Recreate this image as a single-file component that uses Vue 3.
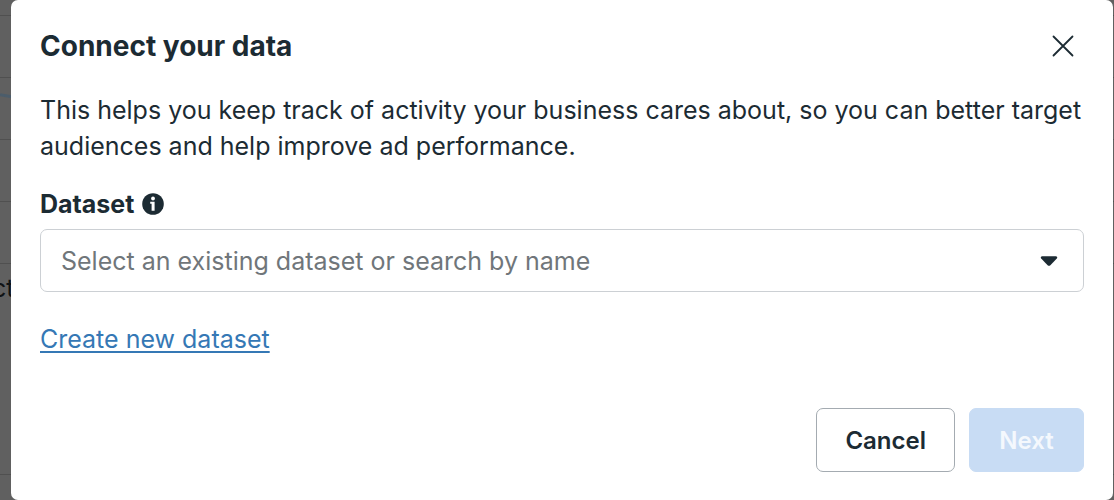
<script setup>
import { ref } from 'vue'

const open = ref(true)
const search = ref('')

const close = () => {
  open.value = false
}
</script>

<template>
  <main class="page">
    <!-- page behind the dialog -->
    <div class="backdrop" aria-hidden="true">
      <div class="chart-row chart-row-first"></div>
      <div class="chart-row"></div>
      <div class="chart-row">
        <svg class="chart-line" viewBox="0 0 12 8" width="12" height="8">
          <path d="M0 2.8 L12 4.8" stroke="#4c5d6b" stroke-width="3" fill="none" />
        </svg>
      </div>
      <div class="chart-row"></div>
      <div class="chart-row"></div>
      <div class="chart-row chart-row-text">
        <span>ct</span>
      </div>
    </div>

    <section v-if="open" class="dialog" role="dialog" aria-labelledby="dialog-title">
      <header class="dialog-header">
        <h1 id="dialog-title">Connect your data</h1>
        <button class="close" type="button" aria-label="Close" @click="close">
          <svg viewBox="0 0 22 22" width="22" height="22">
            <path d="M1.5 1.5 L20.5 20.5 M20.5 1.5 L1.5 20.5" stroke="#1c2b33" stroke-width="1.8" stroke-linecap="round" />
          </svg>
        </button>
      </header>

      <p class="description">
        This helps you keep track of activity your business cares about, so you can better target
        audiences and help improve ad performance.
      </p>

      <div class="label-row">
        <label for="dataset">Dataset</label>
        <svg viewBox="0 0 22 22" width="22" height="22" aria-hidden="true">
          <circle cx="11" cy="11" r="10.8" fill="#1c2b33" />
          <circle cx="11" cy="5.5" r="1.9" fill="#fff" />
          <path d="M8.2 8.8 H12.6 V17.8 H9.6 V10.8 H8.2 Z" fill="#fff" />
        </svg>
      </div>

      <div class="combobox">
        <input
          id="dataset"
          v-model="search"
          type="text"
          role="combobox"
          aria-expanded="false"
          placeholder="Select an existing dataset or search by name"
        />
        <button class="toggle" type="button" aria-label="Show datasets">
          <svg viewBox="0 0 18 10" width="18" height="10">
            <path d="M2 0.3 H16 Q18 0.8 16.8 2.6 L10.4 9.2 Q9 10.4 7.6 9.2 L1.2 2.6 Q0 0.8 2 0.3 Z" fill="#1c2b33" />
          </svg>
        </button>
      </div>

      <a class="create" href="#create">Create new dataset</a>

      <footer class="dialog-footer">
        <button class="btn" type="button" @click="close">Cancel</button>
        <button class="btn btn-primary" type="button" disabled>Next</button>
      </footer>
    </section>
  </main>
</template>

<style>
body {
  background: #606060;
}
</style>

<style scoped>
.page {
  position: relative;
  min-height: 100vh;
  box-sizing: border-box;
  padding: 0 1px 0 11px;
  overflow: hidden;
  color: #1c2b33;
  font-family: Inter, "Liberation Sans", sans-serif;
  font-size: 25px;
  line-height: 36px;
}

.backdrop {
  position: absolute;
  inset: 0;
}

.chart-row {
  height: 62px;
  box-sizing: border-box;
  border-bottom: 1px solid #505050;
}
.chart-row-first {
  height: 16px;
}
.chart-row-text {
  height: 211px;
  padding-top: 6px;
  color: #101315;
}
.chart-row-text span {
  margin-left: -8px;
}

.chart-line {
  display: block;
  padding-top: 14px;
}

.dialog {
  position: relative;
  box-sizing: border-box;
  min-height: 100vh;
  padding: 28px 29px;
  border-radius: 7px;
  background: #fff;
}

.dialog-header {
  display: flex;
  align-items: center;
  justify-content: space-between;
}
h1 {
  margin: 0;
  font-size: 28px;
  font-weight: 700;
  line-height: 36px;
}
.close {
  display: flex;
  margin-right: 10px;
  padding: 0;
  border: 0;
  background: none;
  cursor: pointer;
}

.description {
  margin: 28px 0 22px;
}

.label-row {
  display: flex;
  align-items: center;
  gap: 8px;
}
label {
  font-weight: 700;
}

.combobox {
  display: flex;
  align-items: center;
  height: 63px;
  box-sizing: border-box;
  margin-top: 7px;
  padding: 0 25px 0 20px;
  border: 1px solid #ccd0d4;
  border-radius: 7px;
}
input {
  flex: 1;
  min-width: 0;
  padding: 0;
  border: 0;
  outline: 0;
  background: none;
  color: inherit;
  font: inherit;
}
input::placeholder {
  color: #70767a;
  opacity: 1;
}
.toggle {
  display: flex;
  padding: 0;
  border: 0;
  background: none;
}

.create {
  display: inline-block;
  margin-top: 29px;
  color: #3578b5;
  text-decoration: underline;
  text-decoration-thickness: 2px;
  text-underline-offset: 3px;
}

.dialog-footer {
  display: flex;
  justify-content: flex-end;
  gap: 14px;
  margin-top: 51px;
}
.btn {
  height: 64px;
  padding: 0 28px;
  border: 1px solid #a4abb1;
  border-radius: 7px;
  background: #fff;
  color: #1c2b33;
  font-family: inherit;
  font-size: 24px;
  font-weight: 600;
}
.btn-primary {
  min-width: 115px;
  border-color: #c8dcf4;
  background: #c8dcf4;
  color: #f4f8fd;
}
</style>
